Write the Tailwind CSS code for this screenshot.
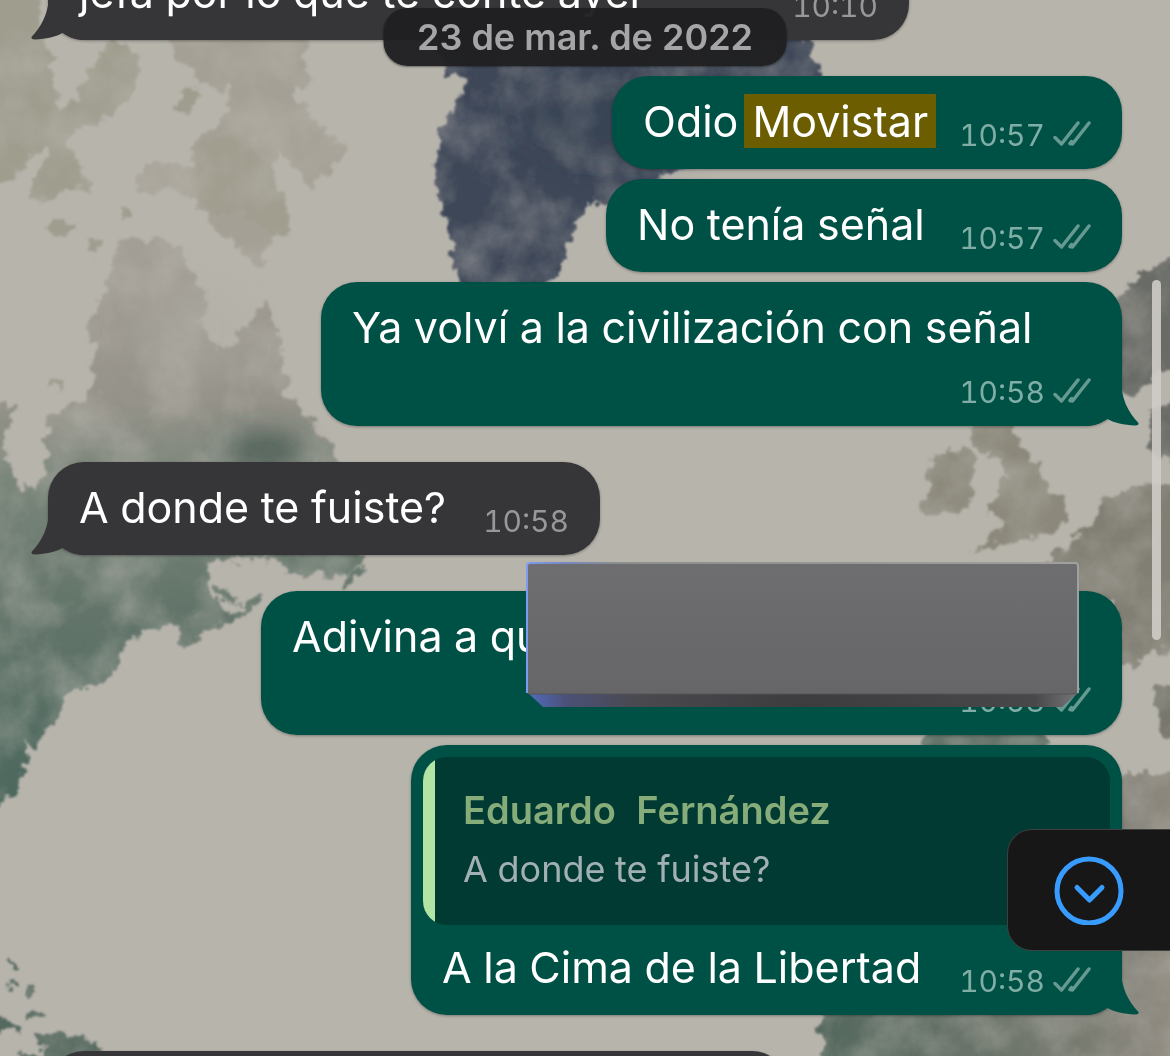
<!DOCTYPE html>
<html lang="es">
<head>
<meta charset="utf-8">
<meta name="viewport" content="width=device-width, initial-scale=1">
<title>Chat</title>
<script src="https://cdn.jsdelivr.net/npm/@tailwindcss/browser@4"></script>
</head>
<body class="bg-[#b7b4ac] font-[Inter,sans-serif] text-white">
<svg width="0" height="0" class="absolute" aria-hidden="true">
  <defs>
    <symbol id="checks" viewBox="0 0 38 26">
      <g fill="none" stroke="currentColor" stroke-width="3.5" stroke-linecap="round" stroke-linejoin="round">
        <path d="M2 16.5 8.500 23 25 2"/>
        <path d="M17 22.500 19.500 23 36 2M17 22.500l1.500-2"/>
      </g>
    </symbol>
    <symbol id="tail" viewBox="0 0 54 46">
      <path fill="currentColor" d="M0 0H35C35 18 42 32 52.500 43Q53 45.500 49 45.500C38 45 28 43 20.500 38.500 14 44 8 46 0 46Z"/>
    </symbol>
  </defs>
</svg>

<main class="relative h-screen overflow-hidden">
  <!-- Watercolour map wallpaper -->
  <svg class="absolute inset-0 h-full w-full" viewBox="0 0 1170 1056" preserveAspectRatio="xMinYMin slice" aria-hidden="true">
    <defs>
      <filter id="coast" x="-5%" y="-5%" width="110%" height="110%" color-interpolation-filters="sRGB">
        <feTurbulence type="fractalNoise" baseFrequency="0.08" numOctaves="4" seed="4" result="n"/>
        <feDisplacementMap in="SourceGraphic" in2="n" scale="20" xChannelSelector="R" yChannelSelector="G" result="d"/>
        <feGaussianBlur in="d" stdDeviation="0.9" result="b"/>
        <feTurbulence type="fractalNoise" baseFrequency="0.02" numOctaves="5" seed="9" result="w"/>
        <feColorMatrix in="w" type="matrix" values="0 0 0 0 0.74  0 0 0 0 0.73  0 0 0 0 0.7  0.9 0 0 0 -0.33" result="wash"/>
        <feComposite in="wash" in2="b" operator="in" result="t"/>
        <feMerge><feMergeNode in="b"/><feMergeNode in="t"/></feMerge>
      </filter>
      <filter id="soft" x="-50%" y="-50%" width="200%" height="200%"><feGaussianBlur stdDeviation="14"/></filter>
      <linearGradient id="america" gradientUnits="userSpaceOnUse" x1="0" y1="240" x2="0" y2="810">
        <stop offset="0" stop-color="#a39e96"/><stop offset=".28" stop-color="#96938a"/>
        <stop offset=".42" stop-color="#7b867b"/><stop offset=".62" stop-color="#65766b"/><stop offset="1" stop-color="#4b675d"/>
      </linearGradient>
      <linearGradient id="africa" gradientUnits="userSpaceOnUse" x1="820" y1="0" x2="1170" y2="0">
        <stop offset="0" stop-color="#55695f"/><stop offset=".7" stop-color="#75796f"/><stop offset="1" stop-color="#8d887e"/>
      </linearGradient>
    </defs>
    <g filter="url(#coast)">
      <g fill="#9f9d8e">
        <path d="M-20-20H45L42 40 52 60 55 90 60 110 76 100 90 70 106 42 128 42 142 68 124 105 102 122 76 130 62 140 82 165 92 192 70 188 42 206 28 190 50 150 40 148 15 178-20 186Z"/>
        <path fill="#a5a095" d="M160 30H300L308 80 290 95 322 125 348 150 335 165 310 192 300 170 280 150 268 170 285 200 290 235 272 235 262 266 240 250 215 230 192 197 175 188 140 190 135 178 150 165 190 165 195 140 225 120 230 90 200 85 180 60Z"/>
        <path d="M195 145 240 135 270 165 285 200 290 235 272 235 240 210 210 215 192 190Z" opacity=".6"/>
        <ellipse cx="188" cy="100" rx="9" ry="17" transform="rotate(30 188 100)"/>
        <ellipse cx="62" cy="228" rx="14" ry="8"/><ellipse cx="93" cy="244" rx="5" ry="9"/>
        <circle cx="125" cy="214" r="4"/><ellipse cx="57" cy="384" rx="8" ry="5"/>
      </g>
      <path fill="url(#america)" d="M118 240 172 240 190 272 205 300 200 330 220 352 245 330 266 300 276 330 288 385 285 395 302 410 326 440 342 465 345 550 366 560 345 574 290 575 275 558 208 562 206 582 214 600 225 612 200 615 180 625 150 630 130 641 116 660 112 678 95 684 68 692 56 716 35 752 28 735 25 772 20 790-20 815V450L-20 405 15 405 4 450 16 478 30 492 42 480 46 450 48 416 86 400 96 385 95 350 88 325 108 285Z"/>
      <path fill="#64756a" d="M178 642 185 622 215 610 240 613 258 588 262 600 242 620 210 627 190 646ZM210 582 235 597 240 606 218 598ZM340 590 350 572 366 565 358 582Z"/>
      <path fill="#3e4758" d="M395 30 790 28 808 40 820 70 815 110 700 160 662 175 640 195 612 206 592 200 578 218 570 247 548 290 462 290 455 262 445 218 434 172 442 130 458 95 470 80 446 75 446 58Z"/>
      <g fill="#8c897c">
        <path d="M925 470 945 450 968 448 978 465 970 480 971 505 940 516 918 512 930 492Z"/>
        <path d="M975 415H1012L1026 450 1041 470 1048 490 1069 495 1066 520 1040 537 1005 541 976 551 990 535 1010 520 988 515 995 490 1010 480 1000 460 985 455 972 440Z"/>
        <path fill="#817f74" d="M1190 480 1140 485 1115 495 1100 502 1095 525 1070 540 1050 560 1060 600H1115L1122 665 1135 670 1148 652 1190 650Z"/>
        <path fill="#696b66" d="M1115 300 1140 272 1190 250V365L1160 372 1137 396 1115 385ZM1150 412 1190 398V470L1150 450Z"/>
        <path fill="#77776c" d="M1156 685 1190 680V740L1160 735Z"/>
        <path fill="#64746a" d="M925 728H1045V760H925Z"/>
      </g>
      <path fill="url(#africa)" d="M1100 775 1190 775V1080H825L818 1000H1100Z"/>
      <g fill="#55695f">
        <path d="M-20 1012 10 1018 22 1030-20 1037ZM34 1035 62 1032 84 1036 104 1052 130 1080H-20V1058L45 1052Z"/>
        <ellipse cx="11" cy="966" rx="3" ry="7"/><ellipse cx="14" cy="982" rx="3" ry="5"/><circle cx="27" cy="992" r="4"/><circle cx="35" cy="1016" r="4"/>
      </g>
    </g>
    <g filter="url(#soft)">
      <ellipse cx="620" cy="120" rx="110" ry="40" fill="#333d50" opacity=".4"/>
      <ellipse cx="262" cy="450" rx="42" ry="16" fill="#2f4740" opacity=".7"/>
      <ellipse cx="190" cy="330" rx="60" ry="50" fill="#b0aca3" opacity=".35"/>
    </g>
  </svg>

  <!-- Conversation, scrolled part-way -->
  <ol class="relative -mt-[53px] flex flex-col gap-[10px] px-12 text-[43px] leading-[54px] tabular-nums">
    <li class="relative mb-[26px] flex h-[93px] w-[861px] justify-between self-start rounded-[36px] bg-[#363638] px-[31px] pt-[18px] shadow-[0_1px_3px_#0005]">
      <svg class="absolute bottom-0 -left-[18px] h-[46px] w-[54px] -scale-x-100 text-[#363638]"><use href="#tail"/></svg>
      <p class="relative whitespace-nowrap">jefa por lo que te conté ayer</p>
      <time class="relative mt-[19px] text-[30px] leading-[44px] text-[#98989c]">10:10</time>
    </li>

    <li class="flex h-[93px] w-[510px] justify-between self-end rounded-[36px] bg-[#005145] px-[31px] pt-[18px] shadow-[0_1px_3px_#0005]">
      <p class="flex whitespace-nowrap">Odio <mark class="ml-[6px] h-[54px] bg-[#6b5d00] px-2 text-white">Movistar</mark></p>
      <span class="mt-[19px] flex gap-2 text-[30px] leading-[44px] text-[#80aea7]"><time>10:57</time><svg class="mt-[8px] h-[26px] w-[38px] text-[#669990]" role="img" aria-label="Entregado"><use href="#checks"/></svg></span>
    </li>

    <li class="flex h-[93px] w-[516px] justify-between self-end rounded-[36px] bg-[#005145] px-[31px] pt-[18px] shadow-[0_1px_3px_#0005]">
      <p class="whitespace-nowrap">No tenía señal</p>
      <span class="mt-[19px] flex gap-2 text-[30px] leading-[44px] text-[#80aea7]"><time>10:57</time><svg class="mt-[8px] h-[26px] w-[38px] text-[#669990]" role="img" aria-label="Entregado"><use href="#checks"/></svg></span>
    </li>

    <li class="relative mb-[26px] flex h-[144px] w-[801px] flex-col justify-between self-end rounded-[36px] bg-[#005145] px-[31px] pt-[18px] pb-[12px] shadow-[0_1px_3px_#0005]">
      <svg class="absolute -right-[18px] bottom-0 h-[46px] w-[54px] text-[#005145]"><use href="#tail"/></svg>
      <p class="relative whitespace-nowrap">Ya volví a la civilización con señal</p>
      <span class="relative flex gap-2 self-end text-[30px] leading-[44px] text-[#80aea7]"><time>10:58</time><svg class="mt-[8px] h-[26px] w-[38px] text-[#669990]" role="img" aria-label="Entregado"><use href="#checks"/></svg></span>
    </li>

    <li class="relative mb-[26px] flex h-[93px] w-[552px] justify-between self-start rounded-[36px] bg-[#363638] px-[31px] pt-[18px] shadow-[0_1px_3px_#0005]">
      <svg class="absolute bottom-0 -left-[18px] h-[46px] w-[54px] -scale-x-100 text-[#363638]"><use href="#tail"/></svg>
      <p class="relative whitespace-nowrap">A donde te fuiste?</p>
      <time class="relative mt-[19px] text-[30px] leading-[44px] text-[#98989c]">10:58</time>
    </li>

    <li class="relative flex h-[144px] w-[861px] flex-col justify-between self-end rounded-[36px] bg-[#005145] px-[31px] pt-[18px] pb-[12px] shadow-[0_1px_3px_#0005]">
      <p class="whitespace-nowrap">Adivina a qu</p>
      <span class="flex gap-2 self-end text-[30px] leading-[44px] text-[#80aea7]"><time>10:58</time><svg class="mt-[8px] h-[26px] w-[38px] text-[#669990]" role="img" aria-label="Entregado"><use href="#checks"/></svg></span>
      <!-- Solid block drawn over the message -->
      <svg class="absolute -top-[29px] right-[42px] h-[146px] w-[554px]" viewBox="0 0 554 146" aria-hidden="true">
        <defs>
          <linearGradient id="face" x1="0" y1="0" x2="0" y2="1"><stop offset="0" stop-color="#6e6e70"/><stop offset="1" stop-color="#666668"/></linearGradient>
          <linearGradient id="under" x1="0" y1="0" x2="1" y2="0"><stop offset="0" stop-color="#536bc0"/><stop offset=".07" stop-color="#4b5178"/><stop offset=".2" stop-color="#49494f"/><stop offset=".5" stop-color="#3d3d3f"/><stop offset=".92" stop-color="#48484a"/><stop offset="1" stop-color="#777779"/></linearGradient>
          <linearGradient id="rim" x1="0" y1="0" x2="1" y2="0"><stop offset="0" stop-color="#7f9bed"/><stop offset=".07" stop-color="#7687c0"/><stop offset=".16" stop-color="#8d8e90"/><stop offset="1" stop-color="#a0a0a0"/></linearGradient>
        </defs>
        <path d="M1 130H553L536 145H17Z" fill="url(#under)"/>
        <rect x="1" y="1" width="552" height="131" rx="3" fill="url(#face)"/>
        <path d="M1 131V4Q1 1 4 1H549Q552 1 552 4V131" fill="none" stroke="url(#rim)" stroke-width="2"/>
        <path d="M3 132H551" stroke="#555557"/>
      </svg>
    </li>

    <li class="relative mb-[26px] flex h-[270px] w-[711px] flex-col self-end rounded-[36px] bg-[#005145] p-3 shadow-[0_1px_3px_#0005]">
      <svg class="absolute -right-[18px] bottom-0 h-[46px] w-[54px] text-[#005145]"><use href="#tail"/></svg>
      <blockquote class="relative flex h-[168px] flex-col overflow-hidden rounded-[24px] bg-[#003a32] pt-[29px] pl-10 text-[36px]">
        <span class="absolute inset-y-0 left-0 w-3 bg-[#b2e4a3]"></span>
        <cite class="text-[38px] leading-[48px] font-semibold whitespace-pre text-[#86ac7a] not-italic">Eduardo  Fernández</cite>
        <p class="mt-2 leading-[54px] whitespace-nowrap text-[#a3b0b3]">A donde te fuiste?</p>
      </blockquote>
      <div class="relative flex justify-between px-[19px] pt-[15px]">
        <p class="whitespace-nowrap">A la Cima de la Libertad</p>
        <span class="mt-[19px] flex gap-2 text-[30px] leading-[44px] text-[#80aea7]"><time>10:58</time><svg class="mt-[8px] h-[26px] w-[38px] text-[#669990]" role="img" aria-label="Entregado"><use href="#checks"/></svg></span>
      </div>
    </li>

    <li class="h-[93px] w-[740px] self-start rounded-[36px] bg-[#363638] shadow-[0_1px_3px_#0005]"></li>
  </ol>

  <div class="absolute top-2 left-1/2 flex h-[58px] w-[403px] -translate-x-1/2 items-center justify-center rounded-[24px] bg-[#202022]/97 text-[36px] font-semibold whitespace-nowrap text-[#a5a5a7] shadow-[0_1px_2px_#0006]">23 de mar. de 2022</div>

  <div class="absolute top-[280px] right-[9px] h-[360px] w-[9px] rounded-full bg-[#cfccc8]/90"></div>

  <button type="button" aria-label="Siguiente resultado" class="absolute top-[830px] right-0 flex h-[120px] w-[162px] items-center justify-center rounded-l-[24px] bg-[#171717] shadow-[0_0_0_1px_#3d403f]">
    <svg class="h-[70px] w-[70px]" viewBox="0 0 70 70" fill="none" stroke="#389cff" stroke-width="5" stroke-linecap="round" stroke-linejoin="round"><circle cx="35" cy="36" r="32"/><path d="m23 32.500 12.500 12.500L48 32.500"/></svg>
  </button>
</main>
</body>
</html>
